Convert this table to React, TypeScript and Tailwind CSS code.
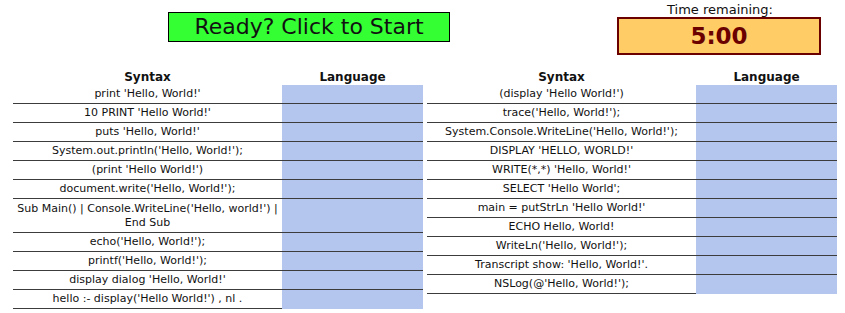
import React from "react";

const left = [
  "print 'Hello, World!'",
  "10 PRINT 'Hello World!'",
  "puts 'Hello, World!'",
  "System.out.println('Hello, World!');",
  "(print 'Hello World!')",
  "document.write('Hello, World!');",
  "Sub Main() | Console.WriteLine('Hello, world!') | End Sub",
  "echo('Hello, World!');",
  "printf('Hello, World!');",
  "display dialog 'Hello, World!'",
  "hello :- display('Hello World!') , nl .",
];

const right = [
  "(display 'Hello World!')",
  "trace('Hello, World!');",
  "System.Console.WriteLine('Hello, World!');",
  "DISPLAY 'HELLO, WORLD!'",
  "WRITE(*,*) 'Hello, World!'",
  "SELECT 'Hello World';",
  "main = putStrLn 'Hello World!'",
  "ECHO Hello, World!",
  "WriteLn('Hello, World!');",
  "Transcript show: 'Hello, World!'.",
  "NSLog(@'Hello, World!');",
];

function QuizTable({ rows }: { rows: string[] }) {
  return (
    <div className="w-[410px] flex flex-col">
      <div className="flex h-[17px] items-center font-bold text-[12px]">
        <div className="w-[269px] text-center">Syntax</div>
        <div className="w-[141px] text-center">Language</div>
      </div>
      {rows.map((r, i) => {
        const tall = r.length > 45;
        return (
          <div
            key={i}
            className={`flex ${tall ? "h-[34px]" : "h-[19px]"}`}
          >
            <div className="w-[269px] border-b border-[#3c3c3c] flex items-center justify-center text-center px-1 leading-[14px]">
              {r}
            </div>
            <div
              className={`w-[141px] bg-[#b4c6ee] ${
                i === rows.length - 1 ? "" : "border-b border-[#3c3c3c]"
              }`}
            />
          </div>
        );
      })}
    </div>
  );
}

export default function App() {
  return (
    <div
      className="w-[845px] h-[313px] bg-white text-[#111] text-[11px] overflow-hidden"
      style={{ fontFamily: '"DejaVu Sans", Verdana, sans-serif' }}
    >
      <div className="flex h-[68px]">
        <div className="ml-[168px] mt-[12px] w-[282px] h-[30px] border border-black bg-[#33ff33] flex items-center justify-center text-[22px] leading-none">
          Ready? Click to Start
        </div>
        <div className="ml-[167px] w-[204px] flex flex-col items-center">
          <div className="text-[13px] leading-[15px] mt-[2px] -mr-[2px]">Time remaining:</div>
          <div className="w-[204px] h-[38px] border-2 border-[#6b0000] bg-[#ffcc66] flex items-center justify-center text-[23px] font-bold text-[#6b0000]">
            5:00
          </div>
        </div>
      </div>
      <div className="flex ml-[13px] gap-[4px]">
        <QuizTable rows={left} />
        <QuizTable rows={right} />
      </div>
    </div>
  );
}
